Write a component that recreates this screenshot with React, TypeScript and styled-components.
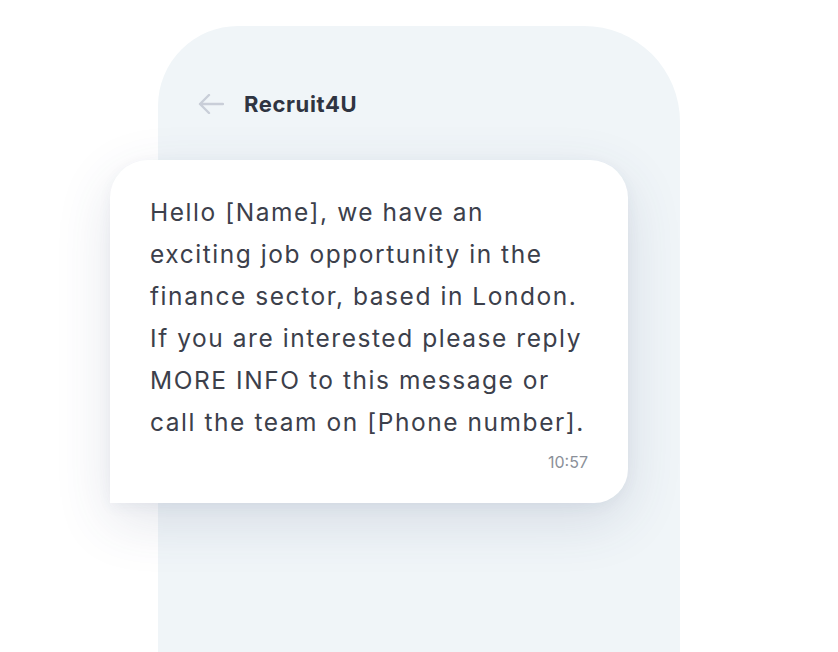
import React from "react";
import styled, { createGlobalStyle } from "styled-components";

const Global = createGlobalStyle`
  html, body { margin: 0; padding: 0; background: #ffffff; }
  body { font-family: "Inter", "Noto Sans", sans-serif; overflow: hidden; }
`;

const Stage = styled.div`
  width: 838px;
  height: 652px;
  overflow: hidden;
  background: #ffffff;
  padding: 26px 0 0 158px;
  box-sizing: border-box;
`;

const Phone = styled.div`
  width: 522px;
  height: 700px;
  background: #f0f5f8;
  border-radius: 80px 96px 0 0;
  padding: 62px 0 0 40px;
  box-sizing: border-box;
  display: flex;
  flex-direction: column;
`;

const Header = styled.div`
  display: flex;
  align-items: center;
  gap: 20px;
  height: 32px;
`;

const Title = styled.span`
  font-family: "Inter", sans-serif;
  font-weight: 700;
  font-size: 22px;
  color: #2f3441;
  letter-spacing: 0.6px;
`;

const Bubble = styled.div`
  margin: 40px 0 0 -88px;
  width: 518px;
  height: 343px;
  box-sizing: border-box;
  background: #ffffff;
  border-radius: 38px 38px 34px 0;
  box-shadow: 0 18px 56px rgba(60, 70, 110, 0.14), 0 4px 14px rgba(60, 70, 110, 0.05);
  padding: 31px 30px 0 40px;
  display: flex;
  flex-direction: column;
`;

const Message = styled.p`
  margin: 0;
  font-family: "Inter", sans-serif;
  font-size: 24.5px;
  line-height: 42px;
  color: #3c404b;
  letter-spacing: 1.55px;
  white-space: nowrap;
`;

const Time = styled.span`
  align-self: flex-end;
  margin: 9px 10px 0 0;
  font-family: "Inter", sans-serif;
  font-size: 16px;
  color: #8b9099;
`;

const lines = [
  "Hello [Name], we have an",
  "exciting job opportunity in the",
  "finance sector, based in London.",
  "If you are interested please reply",
  "MORE INFO to this message or",
  "call the team on [Phone number].",
];

export default function App() {
  return (
    <Stage>
      <Global />
      <Phone>
        <Header>
          <svg width="26" height="20" viewBox="0 0 26 20" fill="none">
            <path d="M25 10H2M11 1L2 10l9 9" stroke="#c9ced8" strokeWidth="2.4" strokeLinecap="round" strokeLinejoin="round" />
          </svg>
          <Title>Recruit4U</Title>
        </Header>
        <Bubble>
          <Message>
            {lines.map((l, i) => (
              <React.Fragment key={i}>
                {l}
                {i < lines.length - 1 && <br />}
              </React.Fragment>
            ))}
          </Message>
          <Time>10:57</Time>
        </Bubble>
      </Phone>
    </Stage>
  );
}
